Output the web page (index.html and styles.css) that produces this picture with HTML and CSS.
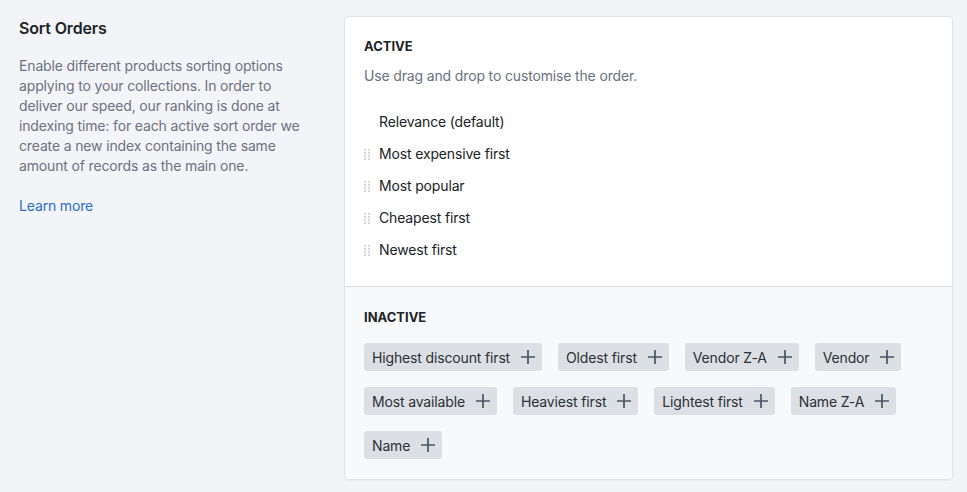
FILE: index.html
```html
<!DOCTYPE html>
<html lang="en">
<head>
    <meta charset="UTF-8">
    <meta name="viewport" content="width=device-width, initial-scale=1.0">
    <title>Sort Orders</title>
    <link rel="stylesheet" href="styles.css">
</head>
<body>

<div class="layout">
    <div class="intro">
        <h2 class="intro-title">Sort Orders</h2>
        <p class="intro-text">Enable different products sorting options applying to your collections. In order to deliver our speed, our ranking is done at indexing time: for each active sort order we create a new index containing the same amount of records as the main one.</p>
        <a class="learn-more" href="#">Learn more</a>
    </div>

    <div class="card">
        <div class="section active">
            <h3 class="section-title">Active</h3>
            <p class="section-hint">Use drag and drop to customise the order.</p>
            <ul class="sort-list">
                <li class="sort-item"><span class="handle"></span>Relevance (default)</li>
                <li class="sort-item"><svg class="handle" viewBox="0 0 6 11"><path d="M0 0h2v2H0zM4 0h2v2H4zM0 3h2v2H0zM4 3h2v2H4zM0 6h2v2H0zM4 6h2v2H4zM0 9h2v2H0zM4 9h2v2H4z"/></svg>Most expensive first</li>
                <li class="sort-item"><svg class="handle" viewBox="0 0 6 11"><path d="M0 0h2v2H0zM4 0h2v2H4zM0 3h2v2H0zM4 3h2v2H4zM0 6h2v2H0zM4 6h2v2H4zM0 9h2v2H0zM4 9h2v2H4z"/></svg>Most popular</li>
                <li class="sort-item"><svg class="handle" viewBox="0 0 6 11"><path d="M0 0h2v2H0zM4 0h2v2H4zM0 3h2v2H0zM4 3h2v2H4zM0 6h2v2H0zM4 6h2v2H4zM0 9h2v2H0zM4 9h2v2H4z"/></svg>Cheapest first</li>
                <li class="sort-item"><svg class="handle" viewBox="0 0 6 11"><path d="M0 0h2v2H0zM4 0h2v2H4zM0 3h2v2H0zM4 3h2v2H4zM0 6h2v2H0zM4 6h2v2H4zM0 9h2v2H0zM4 9h2v2H4z"/></svg>Newest first</li>
            </ul>
        </div>

        <div class="section inactive">
            <h3 class="section-title">Inactive</h3>
            <div class="chips">
                <button class="chip">Highest discount first<svg class="plus" viewBox="0 0 16 16"><path d="M8 1v14M1 8h14"/></svg></button>
                <button class="chip">Oldest first<svg class="plus" viewBox="0 0 16 16"><path d="M8 1v14M1 8h14"/></svg></button>
                <button class="chip">Vendor Z-A<svg class="plus" viewBox="0 0 16 16"><path d="M8 1v14M1 8h14"/></svg></button>
                <button class="chip">Vendor<svg class="plus" viewBox="0 0 16 16"><path d="M8 1v14M1 8h14"/></svg></button>
                <button class="chip">Most available<svg class="plus" viewBox="0 0 16 16"><path d="M8 1v14M1 8h14"/></svg></button>
                <button class="chip">Heaviest first<svg class="plus" viewBox="0 0 16 16"><path d="M8 1v14M1 8h14"/></svg></button>
                <button class="chip">Lightest first<svg class="plus" viewBox="0 0 16 16"><path d="M8 1v14M1 8h14"/></svg></button>
                <button class="chip">Name Z-A<svg class="plus" viewBox="0 0 16 16"><path d="M8 1v14M1 8h14"/></svg></button>
                <button class="chip">Name<svg class="plus" viewBox="0 0 16 16"><path d="M8 1v14M1 8h14"/></svg></button>
            </div>
        </div>
    </div>
</div>

</body>
</html>
```

FILE: styles.css
```css
body {
    margin: 0;
    font-family: Inter, "Noto Sans", Arial, sans-serif;
    font-size: 14px;
    line-height: 20px;
    letter-spacing: -0.15px;
    color: #202327;
    background-color: #f3f4f7;
}

.layout {
    display: flex;
    gap: 35px;
    padding: 16px 14px 13px 19px;
}

.intro {
    width: 290px;
    flex-shrink: 0;
}

.intro-title {
    margin: 0;
    font-size: 16px;
    line-height: 24px;
    font-weight: 600;
    color: #202327;
}

.intro-text {
    margin: 16px 0 20px;
    color: #6b7280;
}

.learn-more {
    color: #2c6ecb;
    text-decoration: none;
}

.card {
    flex: 1;
    background-color: white;
    border: 1px solid #e1e3e7;
    border-radius: 4px;
    box-shadow: 0 1px 1px rgba(0, 0, 0, 0.04);
    overflow: hidden;
}

.section {
    padding: 19px 19px 20px;
}

.section-title {
    margin: 0;
    font-size: 13px;
    line-height: 20px;
    font-weight: 700;
    letter-spacing: 0;
    text-transform: uppercase;
    color: #202327;
}

.section-hint {
    margin: 10px 0 0;
    color: #6b7280;
}

.sort-list {
    list-style: none;
    margin: 20px 0 0;
    padding: 0;
}

.sort-item {
    display: flex;
    align-items: center;
    height: 32px;
    color: #202327;
}

.handle {
    width: 6px;
    height: 11px;
    margin: 1px 9px 0 0;
    fill: #d3d7dd;
}

.inactive {
    background-color: #f8f9fb;
    border-top: 1px solid #dfe1e5;
    padding-top: 20px;
}

.chips {
    display: flex;
    flex-wrap: wrap;
    gap: 16px;
    margin-top: 16px;
}

.chip {
    display: flex;
    align-items: center;
    height: 28px;
    padding: 0 6px 0 8px;
    border: none;
    border-radius: 3px;
    background-color: #dcdfe4;
    font-family: inherit;
    font-size: 14px;
    letter-spacing: -0.15px;
    color: #2b3036;
    cursor: pointer;
}

.plus {
    width: 16px;
    height: 16px;
    margin-left: 10px;
    fill: none;
    stroke: #4a5561;
    stroke-width: 1.7;
}
```
